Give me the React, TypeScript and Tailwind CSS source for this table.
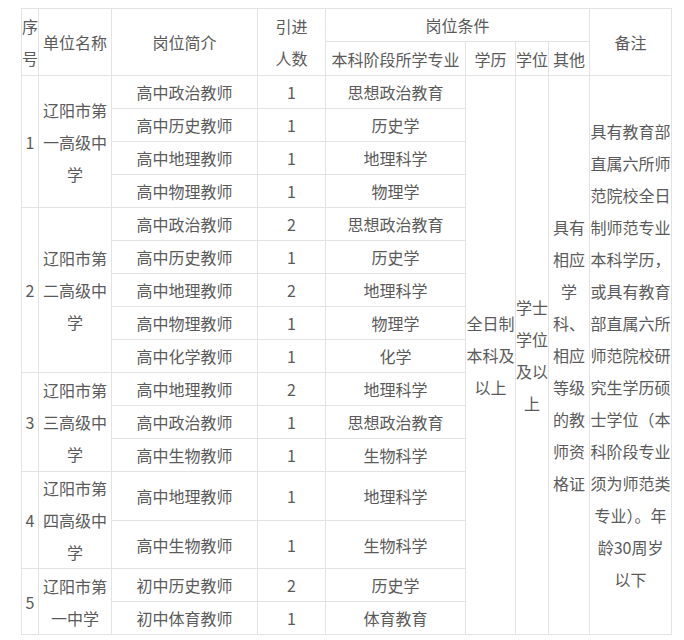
import { FC } from 'react';

type School = {
  no: number;
  name: string;
  rows: { post: string; count: number; major: string; h: string }[];
};

const schools: School[] = [
  {
    no: 1,
    name: '辽阳市第一高级中学',
    rows: [
      { post: '高中政治教师', count: 1, major: '思想政治教育', h: 'h-[33px]' },
      { post: '高中历史教师', count: 1, major: '历史学', h: 'h-[33px]' },
      { post: '高中地理教师', count: 1, major: '地理科学', h: 'h-[33px]' },
      { post: '高中物理教师', count: 1, major: '物理学', h: 'h-[33px]' },
    ],
  },
  {
    no: 2,
    name: '辽阳市第二高级中学',
    rows: [
      { post: '高中政治教师', count: 2, major: '思想政治教育', h: 'h-[33px]' },
      { post: '高中历史教师', count: 1, major: '历史学', h: 'h-[33px]' },
      { post: '高中地理教师', count: 2, major: '地理科学', h: 'h-[33px]' },
      { post: '高中物理教师', count: 1, major: '物理学', h: 'h-[33px]' },
      { post: '高中化学教师', count: 1, major: '化学', h: 'h-[33px]' },
    ],
  },
  {
    no: 3,
    name: '辽阳市第三高级中学',
    rows: [
      { post: '高中地理教师', count: 2, major: '地理科学', h: 'h-[33px]' },
      { post: '高中政治教师', count: 1, major: '思想政治教育', h: 'h-[33px]' },
      { post: '高中生物教师', count: 1, major: '生物科学', h: 'h-[33px]' },
    ],
  },
  {
    no: 4,
    name: '辽阳市第四高级中学',
    rows: [
      { post: '高中地理教师', count: 1, major: '地理科学', h: 'h-[49px]' },
      { post: '高中生物教师', count: 1, major: '生物科学', h: 'h-[48px]' },
    ],
  },
  {
    no: 5,
    name: '辽阳市第一中学',
    rows: [
      { post: '初中历史教师', count: 2, major: '历史学', h: 'h-[33px]' },
      { post: '初中体育教师', count: 1, major: '体育教育', h: 'h-[33px]' },
    ],
  },
];

const totalRows = schools.reduce((n, s) => n + s.rows.length, 0);

const cell = 'border border-[#e3e3e3] p-0 text-center align-middle';

const remark =
  '具有教育部直属六所师范院校全日制师范专业本科学历，或具有教育部直属六所师范院校研究生学历硕士学位（本科阶段专业须为师范类专业）。年龄30周岁以下';

const App: FC = () => {
  return (
    <div className="min-h-[640px] bg-white pt-[8px] pl-[21px]">
      <table
        className="table-fixed border-collapse w-[650px] text-[16px] leading-[32px] text-[#5a5a5a]"
        style={{ fontFamily: '"Noto Sans CJK SC", "Noto Sans", sans-serif' }}
      >
        <colgroup>
          <col className="w-[17px]" />
          <col className="w-[73px]" />
          <col className="w-[146px]" />
          <col className="w-[68px]" />
          <col className="w-[140px]" />
          <col className="w-[50px]" />
          <col className="w-[33px]" />
          <col className="w-[41px]" />
          <col className="w-[82px]" />
        </colgroup>
        <thead>
          <tr className="h-[33px]">
            <th rowSpan={2} className={`${cell} font-normal`}>序号</th>
            <th rowSpan={2} className={`${cell} font-normal`}>单位名称</th>
            <th rowSpan={2} className={`${cell} font-normal`}>岗位简介</th>
            <th rowSpan={2} className={`${cell} font-normal px-[14px]`}>引进人数</th>
            <th colSpan={4} className={`${cell} font-normal`}>岗位条件</th>
            <th rowSpan={2} className={`${cell} font-normal`}>备注</th>
          </tr>
          <tr className="h-[34px]">
            <th className={`${cell} font-normal`}>本科阶段所学专业</th>
            <th className={`${cell} font-normal`}>学历</th>
            <th className={`${cell} font-normal`}>学位</th>
            <th className={`${cell} font-normal`}>其他</th>
          </tr>
        </thead>
        <tbody>
          {schools.map((s, si) =>
            s.rows.map((r, ri) => (
              <tr key={`${s.no}-${ri}`} className={r.h}>
                {ri === 0 && (
                  <>
                    <td rowSpan={s.rows.length} className={cell}>{s.no}</td>
                    <td rowSpan={s.rows.length} className={`${cell} px-[4px]`}>{s.name}</td>
                  </>
                )}
                <td className={cell}>{r.post}</td>
                <td className={cell}>{r.count}</td>
                <td className={cell}>{r.major}</td>
                {si === 0 && ri === 0 && (
                  <>
                    <td rowSpan={totalRows} className={cell}>全日制本科及以上</td>
                    <td rowSpan={totalRows} className={cell}>学士学位及以上</td>
                    <td rowSpan={totalRows} className={cell}>具有相应学科、相应等级的教师资格证</td>
                    <td rowSpan={totalRows} className={cell}>{remark}</td>
                  </>
                )}
              </tr>
            ))
          )}
        </tbody>
      </table>
    </div>
  );
};

export default App;
